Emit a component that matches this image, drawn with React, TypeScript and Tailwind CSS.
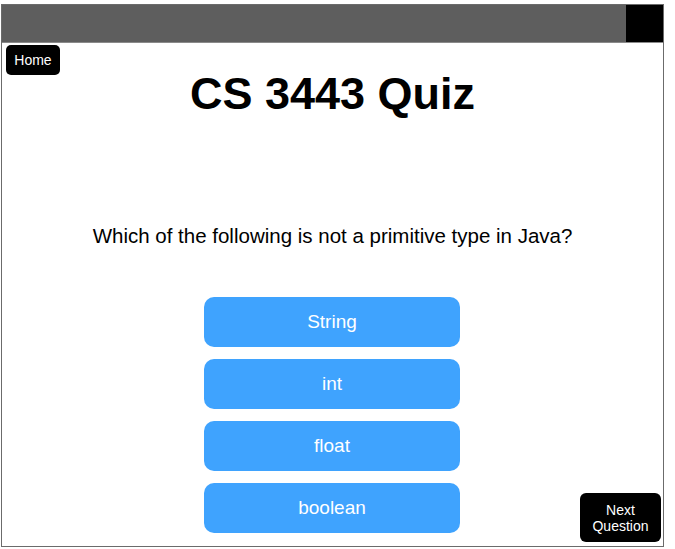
import React from 'react';

const ANSWERS = ['String', 'int', 'float', 'boolean'];

const App: React.FC = () => {
  return (
    <div
      className="w-[675px] h-[549px] bg-white overflow-hidden"
      style={{ fontFamily: '"Liberation Sans", Arial, sans-serif' }}
    >
      <div className="h-[4px]" />
      <div className="relative ml-[1px] w-[663px] h-[543px] border border-[#6b6b6b] flex flex-col">
        {/* top bar */}
        <div className="flex h-[38px] border-b border-[#8a8a8a]">
          <div className="flex-1 bg-[#5e5e5e]" />
          <div className="w-[37px] bg-black" />
        </div>

        <div className="flex flex-col">
          <div className="mt-[2px] ml-[4px]">
            <button className="w-[54px] h-[30px] rounded-[5px] bg-black text-white text-[14px] leading-none">
              Home
            </button>
          </div>

          <h1 className="-mt-[4px] text-center text-[45px] leading-none font-bold text-black">
            CS 3443 Quiz
          </h1>

          <p className="mt-[110px] text-center text-[20.5px] leading-none text-black">
            Which of the following is not a primitive type in Java?
          </p>

          <div className="mt-[50px] flex flex-col items-center gap-[12px] pr-[1px]">
            {ANSWERS.map(answer => (
              <button
                key={answer}
                className="w-[256px] h-[50px] rounded-[10px] bg-[#3fa3fe] text-white text-[19px] leading-none"
              >
                {answer}
              </button>
            ))}
          </div>
        </div>

        <button className="absolute right-[2px] bottom-[4px] w-[81px] h-[49px] rounded-[6px] bg-black text-white text-[14px] leading-[16px]">
          Next
          <br />
          Question
        </button>
      </div>
    </div>
  );
};

export default App;
